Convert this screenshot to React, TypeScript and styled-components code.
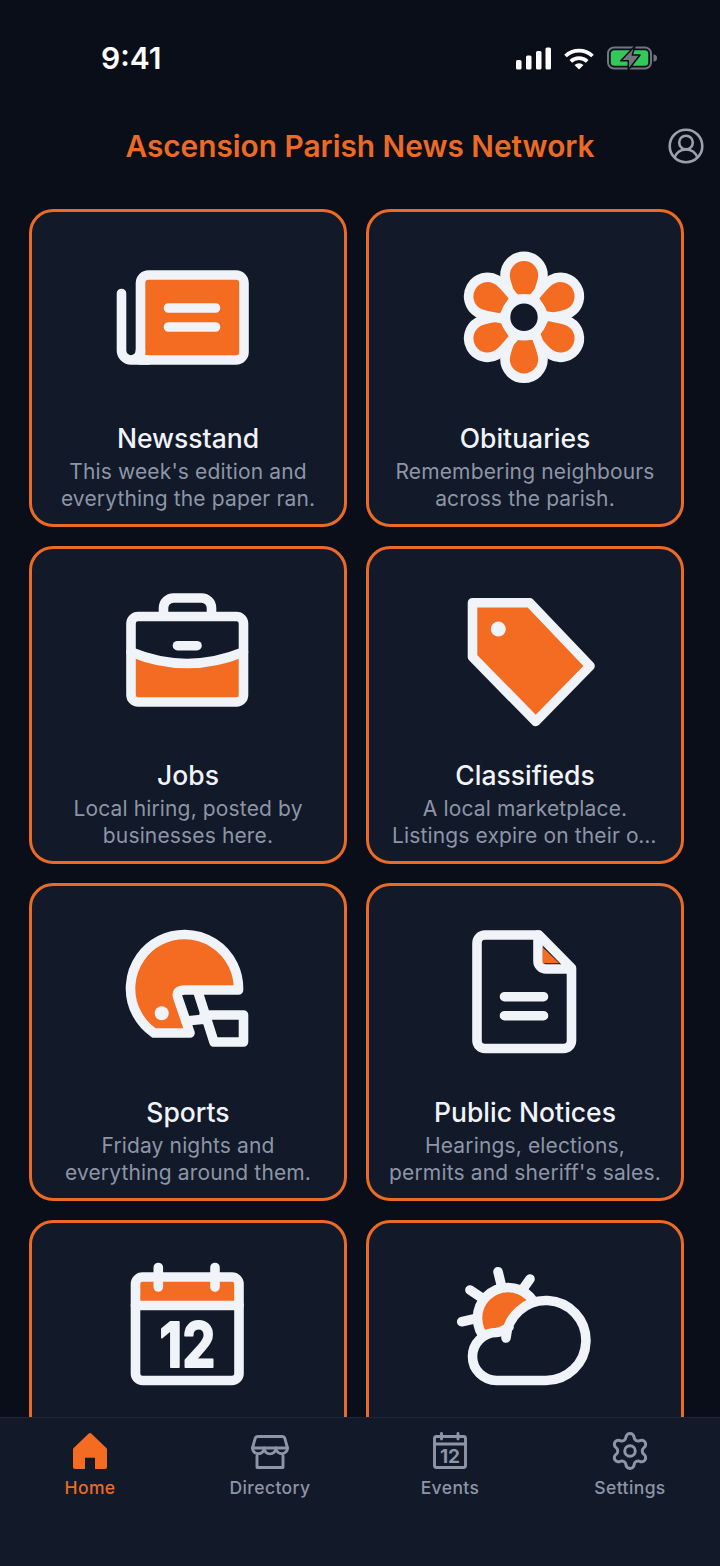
import React from 'react';
import styled, { createGlobalStyle } from 'styled-components';
import { Settings } from 'lucide-react';

const orange = '#f46b22';
const edge = '#ea6a26';
const ink = '#f0f3f7';
const panel = '#121929';
const muted = '#8d95a6';

const GlobalStyle = createGlobalStyle`
  html, body { margin: 0; padding: 0; background: #0a0e18; }
  * { box-sizing: border-box; }
`;

const Screen = styled.div`
  width: 720px;
  height: 1566px;
  display: flex;
  flex-direction: column;
  overflow: hidden;
  background: #0a0e18;
  font-family: Inter, "Liberation Sans", sans-serif;
`;

const StatusBar = styled.div`
  height: 116px;
  flex: none;
  display: flex;
  align-items: center;
  justify-content: space-between;
  padding: 0 63px 0 101px;
`;

const Clock = styled.span`
  color: #fff;
  font-size: 30px;
  font-weight: 600;
  line-height: 36px;
`;

const StatusIcons = styled.div`
  display: flex;
  align-items: center;
  gap: 13px;
`;

const Header = styled.header`
  height: 60px;
  flex: none;
  display: grid;
  grid-template-columns: 1fr auto 1fr;
  align-items: center;
`;

const Title = styled.h1`
  grid-column: 2;
  margin: 0;
  color: ${edge};
  font-size: 29.8px;
  font-weight: 600;
  line-height: 38px;
  white-space: nowrap;
`;

const AccountButton = styled.div`
  grid-column: 3;
  display: flex;
  justify-content: flex-end;
  padding-right: 16px;
`;

const Main = styled.main`
  flex: 1;
  min-height: 0;
  overflow: hidden;
  padding: 33px 0 0 29px;
`;

const Grid = styled.div`
  display: grid;
  grid-template-columns: 318px 318px;
  grid-auto-rows: 318px;
  gap: 19px;
`;

const Card = styled.article`
  border: 3px solid ${edge};
  border-radius: 24px;
  background: ${panel};
  display: flex;
  flex-direction: column;
  align-items: center;
  padding: 35px 17px 0;
`;

const IconSvg = styled.svg`
  display: block;
  flex: none;
  overflow: visible;
  fill: none;
  stroke: ${ink};
  stroke-width: 9.6;
  stroke-linecap: round;
  stroke-linejoin: round;
`;

const Accent = styled.path`
  fill: ${orange};
  stroke: none;
`;

const Filled = styled.path`
  fill: ${orange};
`;

const Dot = styled.circle`
  fill: ${ink};
  stroke: none;
`;

const SunDisc = styled.circle`
  fill: ${orange};
`;

const CloudFill = styled.path`
  fill: ${panel};
  stroke: none;
`;

const CardTitle = styled.h2`
  margin: 34px 0 0;
  color: ${ink};
  font-size: 26.5px;
  font-weight: 500;
  line-height: 34px;
  white-space: nowrap;
`;

const CardText = styled.div`
  margin-top: 3px;
  width: 100%;
  color: ${muted};
  font-size: 21px;
  letter-spacing: 0.14px;
  line-height: 27px;
  text-align: center;
`;

const TextLine = styled.div<{ $clipped?: boolean }>`
  white-space: nowrap;
  overflow: hidden;
  text-overflow: ellipsis;
  padding: 0 ${(p) => (p.$clipped ? '6px' : '0')};
`;

const TabBar = styled.nav`
  height: 149px;
  flex: none;
  display: grid;
  grid-template-columns: repeat(4, 1fr);
  align-items: start;
  padding-top: 13px;
  background: ${panel};
  border-top: 1px solid #1e2638;
`;

const Tab = styled.div<{ $active?: boolean }>`
  display: flex;
  flex-direction: column;
  align-items: center;
  gap: 6px;
  color: ${(p) => (p.$active ? edge : muted)};
`;

const TabLabel = styled.span`
  font-size: 17.5px;
  font-weight: 500;
  letter-spacing: 0.4px;
  line-height: 22px;
`;

const TabSvg = styled.svg`
  display: block;
  fill: none;
  stroke: currentColor;
  stroke-width: 2.9;
  stroke-linecap: round;
  stroke-linejoin: round;
`;

const HomeSvg = styled(TabSvg)`
  stroke: none;
  fill: ${orange};
`;

const GearIcon = styled(Settings)`
  display: block;
  margin: -1px 0;
`;

const NewspaperIcon = () => (
  <IconSvg width={140} height={140} viewBox="0 0 140 140">
    <Filled d="M30.5 28H118a8 8 0 0 1 8 8V105a8 8 0 0 1-8 8H22.5V36a8 8 0 0 1 8-8Z" />
    <path d="M3.5 46.5V103.5a9.5 9.5 0 0 0 19 0M13 113H30" />
    <path d="M50.5 61H97.5M50.5 80H97.5" />
  </IconSvg>
);

const FlowerIcon = () => (
  <IconSvg width={140} height={140} viewBox="0 0 140 140">
    <g transform="translate(69 70.3)">
      {[0, 60, 120, 180, 240, 300].map((a) => (
        <Filled
          key={a}
          transform={`rotate(${a})`}
          d="M-12-18C-15-27-19-35-19-42A19 19 0 0 1 19-42C19-35 15-27 12-18Z"
        />
      ))}
      <circle r={18.5} fill={panel} />
    </g>
  </IconSvg>
);

const BriefcaseIcon = () => (
  <IconSvg width={140} height={140} viewBox="0 0 140 140">
    <Accent d="M13 68Q69 91 125.500 68V118H13Z" />
    <rect x={13} y={32.5} width={112.5} height={85.5} rx={7} />
    <path d="M45.500 32V24A10 10 0 0 1 55.500 14H83.500A10 10 0 0 1 93.500 24V32" />
    <path d="M13 68Q69 91 125.500 68" />
    <path d="M59.500 61.700H79" />
  </IconSvg>
);

const TagIcon = () => (
  <IconSvg width={140} height={140} viewBox="0 0 140 140">
    <Filled d="M17.500 18.700H74.700L135 82 80.700 137.500 17.500 73Z" />
    <Dot cx={43.3} cy={45} r={7.500} />
  </IconSvg>
);

const HelmetIcon = () => (
  <IconSvg width={140} height={140} viewBox="0 0 140 140">
    <Filled d="M120.500 69A54 54 0 1 0 36 112H72L60 77Q57 69 67 69Z" />
    <Dot cx={43.7} cy={92.3} r={7} />
    <path d="M80 71L96 121H125.500V94H86M68 100L88 98" />
  </IconSvg>
);

const DocumentIcon = () => (
  <IconSvg width={140} height={140} viewBox="0 0 140 140">
    <path d="M30 14H84L116.500 47V119.500A8 8 0 0 1 108.500 127.500H30A8 8 0 0 1 22 119.500V22A8 8 0 0 1 30 14Z" />
    <path d="M83 14V40A8 8 0 0 0 91 48H116" />
    <Accent d="M87.700 26.300L104.300 42.300H87.700Z" />
    <path d="M49.500 75.700H88.500M49.500 94.700H88.500" />
  </IconSvg>
);

const CalendarDigits = styled.text`
  fill: ${ink};
  stroke: ${ink};
  stroke-width: 2;
  font-family: Inter, "Liberation Sans", sans-serif;
  font-size: 62px;
  font-weight: 700;
  text-anchor: middle;
`;

const CalendarIcon = () => (
  <IconSvg width={140} height={140} viewBox="0 0 140 140">
    <Accent d="M22 23H117V44H22Z" />
    <rect x={17.500} y={19} width={103.500} height={103.500} rx={7} />
    <path d="M17.500 47.500H121M40.300 9.500V29M97 9.500V29" />
    <CalendarDigits x={69.500} y={108.500} textLength={56} lengthAdjust="spacingAndGlyphs">12</CalendarDigits>
  </IconSvg>
);

const WeatherIcon = () => (
  <IconSvg width={140} height={140} viewBox="0 0 140 140">
    <path d="M43 13.700L47 30M75 21L65 35M15 32L30 42M6.700 63.700L23 60" />
    <SunDisc cx={53} cy={60} r={30.5} />
    <CloudFill d="M51 80A40 40 0 1 1 90.500 122.500H41.500A24 24 0 0 1 41.500 74.500L54 69Z" />
    <path d="M51 80A40 40 0 1 1 90.500 122.500H41.500A24 24 0 0 1 41.500 74.500Q47 74 54 69" />
  </IconSvg>
);

const SignalIcon = () => (
  <svg width={35} height={23} viewBox="0 0 35 23" fill="#fff">
    <rect x={0} y={13} width={5.500} height={9.500} rx={1.500} />
    <rect x={10} y={8.500} width={5.500} height={14} rx={1.500} />
    <rect x={20} y={4} width={5.500} height={18.500} rx={1.500} />
    <rect x={29.500} y={0.500} width={5.500} height={22} rx={1.500} />
  </svg>
);

const WifiIcon = () => (
  <svg width={30} height={23} viewBox="0 0 30 23" fill="none" stroke="#fff" strokeWidth={3.800}>
    <path d="M1.500 9A19.500 19.500 0 0 1 28.500 9" />
    <path d="M6.800 14.300A12 12 0 0 1 23.200 14.300" />
    <path d="M15 22.500L10.500 18Q15 14.500 19.500 18Z" fill="#fff" stroke="none" />
  </svg>
);

const BatteryIcon = () => (
  <svg width={50} height={24} viewBox="0 0 50 24" fill="none">
    <rect x={1} y={1.500} width={43} height={21} rx={6} stroke="#70757f" strokeWidth={2} />
    <rect x={3.800} y={4.300} width={37.500} height={15.400} rx={3.500} fill="#34c759" />
    <path d="M46.500 8.500a3 3 0 0 1 0 7Z" fill="#70757f" />
    <path d="M28 0L13.700 14.700H21.300V24L33 9H25.300Z" fill="#70757f" stroke="#0a0e18" strokeWidth={1.500} strokeLinejoin="round" />
  </svg>
);

const AccountIcon = () => (
  <svg width={36} height={36} viewBox="0 0 36 36" fill="none" stroke="#9aa1ae" strokeWidth={2.600}>
    <circle cx={18} cy={18} r={16.300} />
    <circle cx={18} cy={14.500} r={6.800} />
    <path d="M6.500 29.500C8.500 24.500 13 21.500 18 21.500S27.500 24.500 29.500 29.500" />
  </svg>
);

const HomeTabIcon = () => (
  <HomeSvg width={40} height={40} viewBox="0 0 40 40">
    <path d="M18.700 2.500a2 2 0 0 1 2.600 0L36.300 17a2 2 0 0 1 .7 1.500V36a2 2 0 0 1-2 2H25V26.700H15V38H5a2 2 0 0 1-2-2V18.500a2 2 0 0 1 .7-1.500Z" />
  </HomeSvg>
);

const StoreTabIcon = () => (
  <TabSvg width={40} height={40} viewBox="0 0 40 40">
    <path d="M8 5.500H32A3 3 0 0 1 34.900 7.700L37.500 17H2.500L5.100 7.700A3 3 0 0 1 8 5.500Z" />
    <path d="M2.500 17A5.800 5.800 0 0 0 14.100 17A5.900 5.900 0 0 0 25.900 17A5.800 5.800 0 0 0 37.500 17" />
    <path d="M7 25V36.500H33V25" />
  </TabSvg>
);

const TabDigits = styled.text`
  fill: currentColor;
  stroke: none;
  font-family: Inter, "Liberation Sans", sans-serif;
  font-size: 19px;
  font-weight: 700;
  text-anchor: middle;
`;

const EventsTabIcon = () => (
  <TabSvg width={40} height={40} viewBox="0 0 40 40">
    <rect x={4.500} y={5.500} width={31} height={31} rx={2} />
    <path d="M4.500 13H35.500M11.500 2.500V8M28 2.500V8" />
    <TabDigits x={20} y={32}>12</TabDigits>
  </TabSvg>
);

const cards = [
  { id: 'news', title: 'Newsstand', lines: ["This week's edition and", 'everything the paper ran.'], icon: <NewspaperIcon /> },
  { id: 'obits', title: 'Obituaries', lines: ['Remembering neighbours', 'across the parish.'], icon: <FlowerIcon /> },
  { id: 'jobs', title: 'Jobs', lines: ['Local hiring, posted by', 'businesses here.'], icon: <BriefcaseIcon /> },
  { id: 'ads', title: 'Classifieds', lines: ['A local marketplace.', 'Listings expire on their own.'], clipLast: true, icon: <TagIcon /> },
  { id: 'sports', title: 'Sports', lines: ['Friday nights and', 'everything around them.'], icon: <HelmetIcon /> },
  { id: 'notices', title: 'Public Notices', lines: ['Hearings, elections,', "permits and sheriff's sales."], icon: <DocumentIcon /> },
  { id: 'events', icon: <CalendarIcon /> },
  { id: 'weather', icon: <WeatherIcon /> },
];

export default function App() {
  return (
    <Screen>
      <GlobalStyle />
      <StatusBar>
        <Clock>9:41</Clock>
        <StatusIcons>
          <SignalIcon />
          <WifiIcon />
          <BatteryIcon />
        </StatusIcons>
      </StatusBar>
      <Header>
        <Title>Ascension Parish News Network</Title>
        <AccountButton>
          <AccountIcon />
        </AccountButton>
      </Header>
      <Main>
        <Grid>
          {cards.map((c) => (
            <Card key={c.id}>
              {c.icon}
              {c.title && <CardTitle>{c.title}</CardTitle>}
              {c.lines && (
                <CardText>
                  {c.lines.map((l, i) => (
                    <TextLine key={l} $clipped={c.clipLast && i === 1}>{l}</TextLine>
                  ))}
                </CardText>
              )}
            </Card>
          ))}
        </Grid>
      </Main>
      <TabBar>
        <Tab $active>
          <HomeTabIcon />
          <TabLabel>Home</TabLabel>
        </Tab>
        <Tab>
          <StoreTabIcon />
          <TabLabel>Directory</TabLabel>
        </Tab>
        <Tab>
          <EventsTabIcon />
          <TabLabel>Events</TabLabel>
        </Tab>
        <Tab>
          <GearIcon size={42} strokeWidth={1.7} />
          <TabLabel>Settings</TabLabel>
        </Tab>
      </TabBar>
    </Screen>
  );
}
